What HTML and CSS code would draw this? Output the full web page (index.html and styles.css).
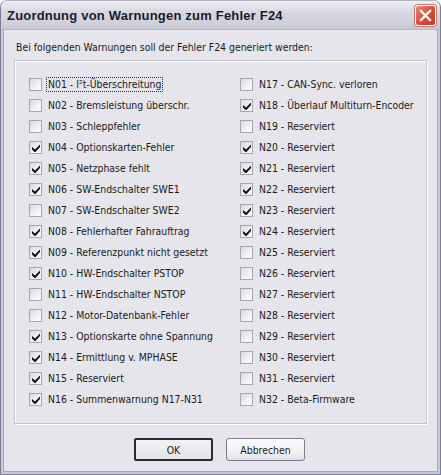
FILE: index.html
```html
<!DOCTYPE html>
<html>
<head>
<meta charset="utf-8">
<link rel="stylesheet" href="styles.css">
</head>
<body>
<div class="window">
  <div class="titlebar">
    <span class="title">Zuordnung von Warnungen zum Fehler F24</span>
    <span class="close"><svg width="13" height="13" viewBox="0 0 13 13"><path d="M2 2 L11 11 M11 2 L2 11" stroke="#fff" stroke-width="2.4" stroke-linecap="square"/></svg></span>
  </div>
  <div class="client">
    <div class="caption">Bei folgenden Warnungen soll der Fehler F24 generiert werden:</div>
    <div class="group">
      <div class="grid">
        <label class="item"><span class="cb"></span><span class="lbl focus">N01 - I²t-Überschreitung</span></label>
        <label class="item"><span class="cb"></span><span class="lbl">N02 - Bremsleistung überschr.</span></label>
        <label class="item"><span class="cb"></span><span class="lbl">N03 - Schleppfehler</span></label>
        <label class="item"><span class="cb on"></span><span class="lbl">N04 - Optionskarten-Fehler</span></label>
        <label class="item"><span class="cb on"></span><span class="lbl">N05 - Netzphase fehlt</span></label>
        <label class="item"><span class="cb on"></span><span class="lbl">N06 - SW-Endschalter SWE1</span></label>
        <label class="item"><span class="cb"></span><span class="lbl">N07 - SW-Endschalter SWE2</span></label>
        <label class="item"><span class="cb on"></span><span class="lbl">N08 - Fehlerhafter Fahrauftrag</span></label>
        <label class="item"><span class="cb on"></span><span class="lbl">N09 - Referenzpunkt nicht gesetzt</span></label>
        <label class="item"><span class="cb on"></span><span class="lbl">N10 - HW-Endschalter PSTOP</span></label>
        <label class="item"><span class="cb"></span><span class="lbl">N11 - HW-Endschalter NSTOP</span></label>
        <label class="item"><span class="cb"></span><span class="lbl">N12 - Motor-Datenbank-Fehler</span></label>
        <label class="item"><span class="cb on"></span><span class="lbl">N13 - Optionskarte ohne Spannung</span></label>
        <label class="item"><span class="cb on"></span><span class="lbl">N14 - Ermittlung v. MPHASE</span></label>
        <label class="item"><span class="cb on"></span><span class="lbl">N15 - Reserviert</span></label>
        <label class="item"><span class="cb on"></span><span class="lbl">N16 - Summenwarnung N17-N31</span></label>
        <label class="item"><span class="cb"></span><span class="lbl">N17 - CAN-Sync. verloren</span></label>
        <label class="item"><span class="cb on"></span><span class="lbl">N18 - Überlauf Multiturn-Encoder</span></label>
        <label class="item"><span class="cb"></span><span class="lbl">N19 - Reserviert</span></label>
        <label class="item"><span class="cb on"></span><span class="lbl">N20 - Reserviert</span></label>
        <label class="item"><span class="cb on"></span><span class="lbl">N21 - Reserviert</span></label>
        <label class="item"><span class="cb on"></span><span class="lbl">N22 - Reserviert</span></label>
        <label class="item"><span class="cb on"></span><span class="lbl">N23 - Reserviert</span></label>
        <label class="item"><span class="cb on"></span><span class="lbl">N24 - Reserviert</span></label>
        <label class="item"><span class="cb"></span><span class="lbl">N25 - Reserviert</span></label>
        <label class="item"><span class="cb"></span><span class="lbl">N26 - Reserviert</span></label>
        <label class="item"><span class="cb"></span><span class="lbl">N27 - Reserviert</span></label>
        <label class="item"><span class="cb"></span><span class="lbl">N28 - Reserviert</span></label>
        <label class="item"><span class="cb"></span><span class="lbl">N29 - Reserviert</span></label>
        <label class="item"><span class="cb"></span><span class="lbl">N30 - Reserviert</span></label>
        <label class="item"><span class="cb"></span><span class="lbl">N31 - Reserviert</span></label>
        <label class="item"><span class="cb"></span><span class="lbl">N32 - Beta-Firmware</span></label>
      </div>
    </div>
    <div class="buttons">
      <button class="btn default">OK</button>
      <button class="btn">Abbrechen</button>
    </div>
  </div>
</div>
</body>
</html>
```
FILE: styles.css
```css
* { box-sizing: border-box; }
html, body { margin: 0; padding: 0; background: #fff; }
body { width: 441px; height: 475px; overflow: hidden; font-family: "DejaVu Sans Condensed", "DejaVu Sans", sans-serif; }

.window {
  width: 441px;
  height: 475px;
  display: flex;
  flex-direction: column;
  background: #e6e5ec;
  border: 1px solid #7c7c94;
  border-top-color: #b4b4c4;
  border-radius: 7px 7px 0 0;
  box-shadow: inset 0 0 0 2px #c8c8d6, inset 0 0 0 3px #a8a8bc;
  overflow: hidden;
}

.titlebar {
  height: 29px;
  flex: none;
  display: flex;
  align-items: center;
  justify-content: space-between;
  padding: 0 4px 0 6px;
  background: linear-gradient(#eeeef3 0%, #d8d8e2 40%, #d0d0da 80%, #c6c6d2 100%);
  border-bottom: 1px solid #b8b8c8;
}
.title {
  font-family: "Liberation Sans", Arial, sans-serif;
  font-weight: bold;
  font-size: 13px;
  color: #1c1c2a;
  letter-spacing: 0.2px;
  padding-top: 1px;
}
.close {
  width: 21px;
  height: 21px;
  border-radius: 3px;
  border: 1px solid #fff;
  background: linear-gradient(135deg, #e88a78 0%, #d8503c 50%, #c03a2a 100%);
  display: flex;
  align-items: center;
  justify-content: center;
  box-shadow: 0 0 0 1px #c8786e;
  margin-top: 1px;
}

.client {
  flex: 1;
  display: flex;
  flex-direction: column;
  padding: 10px 13px 0 13px;
  font-size: 10.4px;
  color: #1a1a1a;
}
.caption {
  height: 20px;
  line-height: 14px;
  padding-left: 2px;
}

.group {
  height: 364px;
  border: 1px solid #c4c3cc;
  box-shadow: inset 1px 1px 0 #fff, 1px 1px 0 #fff;
  padding: 13px 0 0 14px;
}
.grid {
  display: grid;
  grid-auto-flow: column;
  grid-template-rows: repeat(16, 21px);
  grid-template-columns: 211px 1fr;
}
.item {
  display: flex;
  align-items: center;
  height: 21px;
}
.cb {
  width: 13px;
  height: 13px;
  flex: none;
  border: 1px solid #a7a6ae;
  background: linear-gradient(135deg, #d8d7de 0%, #f2f2f4 60%, #fefefe 100%);
  margin-right: 5px;
  position: relative;
}
.cb.on::after {
  content: "";
  position: absolute;
  left: 2px;
  top: 2px;
  width: 8px;
  height: 8px;
  background: no-repeat center/8px 8px url("data:image/svg+xml;utf8,<svg xmlns='http://www.w3.org/2000/svg' width='8' height='8' viewBox='0 0 8 8'><path d='M0 3 L0 5.5 L2.5 8 L3.5 8 L8 3 L8 0.5 L3 5.5 Z' fill='%23111'/></svg>");
}
.lbl {
  line-height: 13px;
  padding: 0 1px;
  white-space: nowrap;
  color: #1a1a1a;
}
.lbl.focus {
  outline: 1px dotted #333;
  outline-offset: 0;
}

.buttons {
  display: flex;
  justify-content: center;
  gap: 13px;
  padding-top: 14px;
  padding-right: 2px;
}
.btn {
  width: 79px;
  height: 23px;
  font-family: "DejaVu Sans Condensed", "DejaVu Sans", sans-serif;
  font-size: 10.4px;
  color: #1a1a1a;
  background: linear-gradient(#fbfbfc 0%, #f0f0f2 70%, #dcdce2 100%);
  border: 1px solid #7d7d8c;
  border-radius: 3px;
  padding: 0;
}
.btn.default {
  border: 2px solid #2a2a30;
  border-radius: 2px;
  background: linear-gradient(#f2f2f4 0%, #e4e4e8 100%);
}
```
